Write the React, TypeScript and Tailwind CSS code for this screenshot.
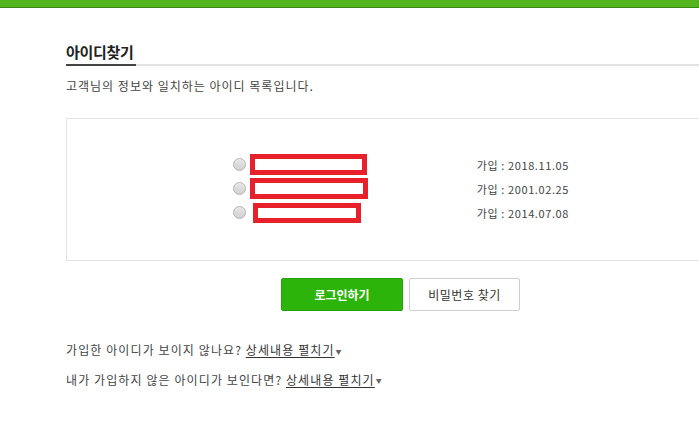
import React, { useState } from 'react';

const accounts = [
  { date: '2018.11.05', box: 'ml-[4px] w-[117px] h-[21px]' },
  { date: '2001.02.25', box: 'ml-[4px] w-[118px] h-[21px]' },
  { date: '2014.07.08', box: 'ml-[7px] w-[108px] h-[20px]' },
];

export default function App() {
  const [selected, setSelected] = useState<number | null>(null);

  return (
    <div className="w-[699px] h-[444px] overflow-hidden bg-white font-['Noto_Sans_CJK_KR',sans-serif] text-[12px] text-[#333]">
      {/* top bar */}
      <div className="h-[8px] bg-[#52b51d] border-b border-[#3b8a12]"></div>

      <div className="pl-[66px] w-[760px]">
        {/* title */}
        <div className="mt-[34px] border-b-2 border-[#e2e2e2]">
          <h2 className="inline-block pb-[2px] text-[15px] font-bold leading-[20px] text-[#222] border-b-2 border-[#444] mb-[-2px] w-[70px] tracking-[-0.3px]">
            아이디찾기
          </h2>
        </div>

        <p className="mt-[11px] leading-[18px] text-[#444] tracking-[1px]">
          고객님의 정보와 일치하는 아이디 목록입니다.
        </p>

        {/* account list */}
        <div className="mt-[23px] h-[143px] border border-[#e3e3e3] pt-[35px]">
          <div className="flex flex-col gap-[3px]">
            {accounts.map((a, i) => (
              <label key={i} className="flex items-center h-[21px] pl-[166px] cursor-pointer">
                <span
                  onClick={() => setSelected(i)}
                  className="w-[13px] h-[13px] rounded-full border border-[#b5b5b5] bg-gradient-to-b from-[#e9e9e9] to-[#cfcfcf] flex items-center justify-center"
                >
                  {selected === i && <span className="w-[5px] h-[5px] rounded-full bg-[#333]"></span>}
                </span>
                <span className={`${a.box} border-[5px] border-[#e8202a] bg-white`}></span>
                <span className="ml-auto mr-[190px] text-[11px] text-[#444] tracking-[0.6px] pt-[2px]">
                  가입 : {a.date}
                </span>
              </label>
            ))}
          </div>
        </div>

        {/* buttons */}
        <div className="mt-[17px] flex gap-[6px] pl-[215px]">
          <button className="w-[122px] h-[33px] rounded-[2px] bg-[#2db40a] border border-[#26a106] text-white text-[12px] font-bold">
            로그인하기
          </button>
          <button className="w-[111px] h-[33px] rounded-[2px] bg-white border border-[#cfcfcf] text-[#333] text-[12px] tracking-[0.5px]">
            비밀번호 찾기
          </button>
        </div>

        {/* help */}
        <div className="mt-[30px] leading-[18px] text-[#444] tracking-[1.1px]">
          <p>
            가입한 아이디가 보이지 않나요?{' '}
            <a href="#" className="underline underline-offset-2 text-[#333]">상세내용 펼치기</a>
            <span className="ml-[1px] text-[6px] align-middle text-[#666]">▼</span>
          </p>
          <p className="mt-[10px]">
            내가 가입하지 않은 아이디가 보인다면?{' '}
            <a href="#" className="underline underline-offset-2 text-[#333]">상세내용 펼치기</a>
            <span className="ml-[1px] text-[6px] align-middle text-[#666]">▼</span>
          </p>
        </div>
      </div>
    </div>
  );
}
